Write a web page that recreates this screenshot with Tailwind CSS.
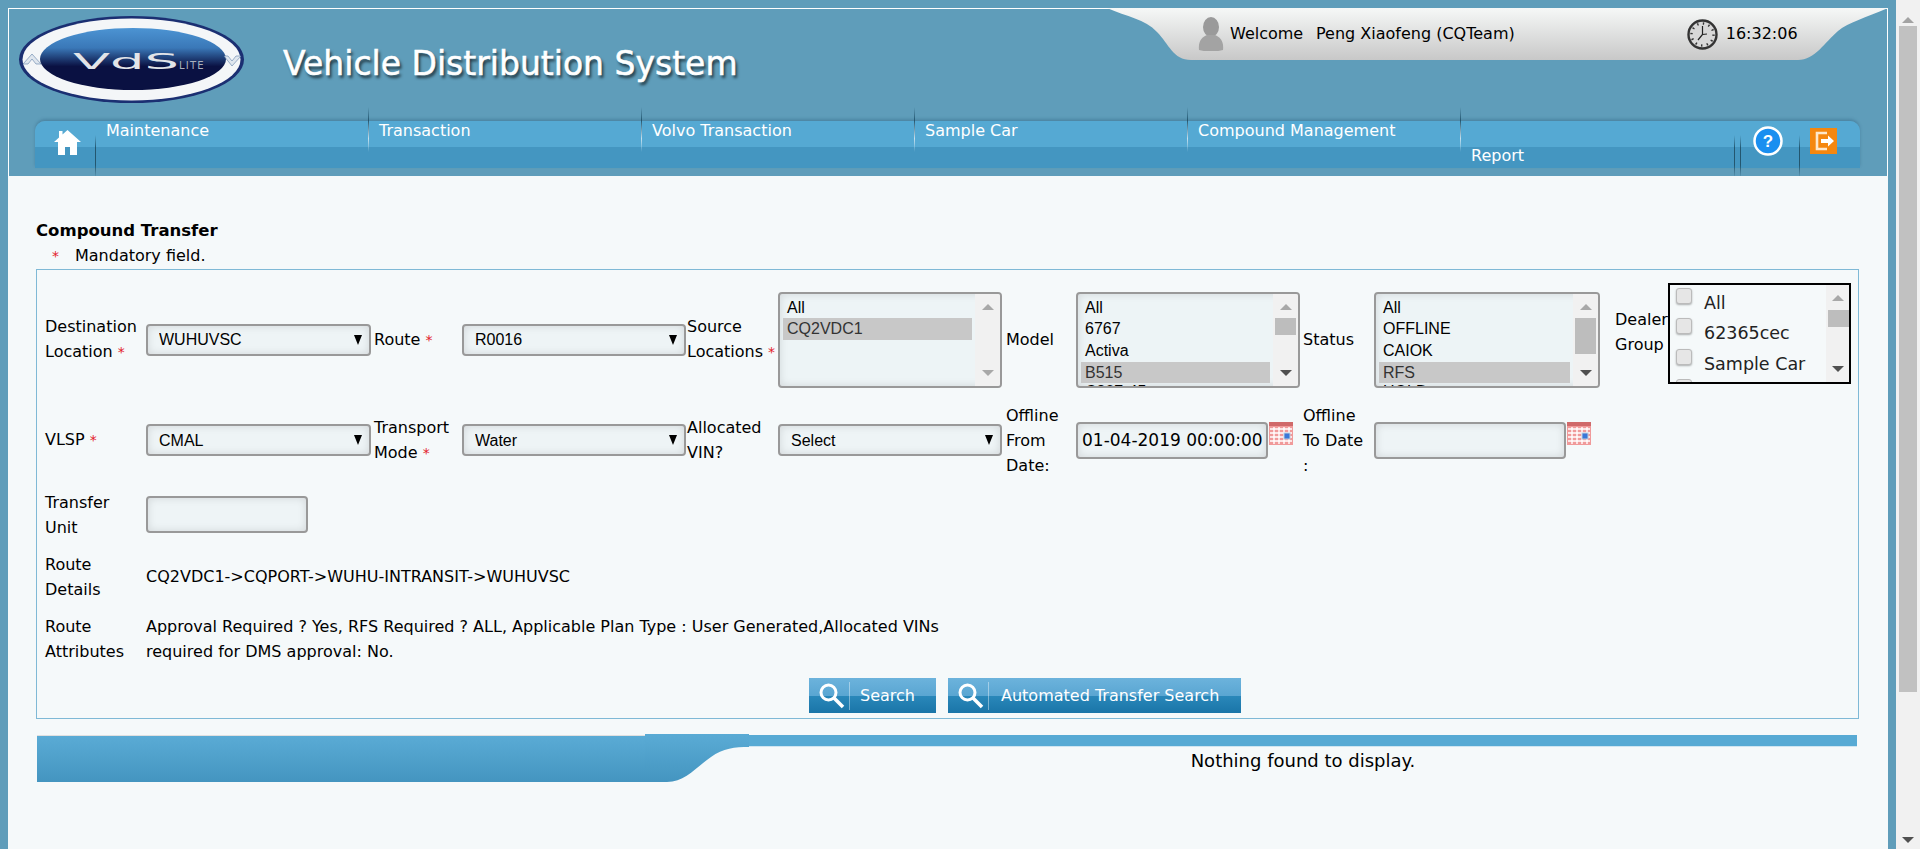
<!DOCTYPE html>
<html lang="en">
<head>
    <meta charset="UTF-8">
    <title>Vehicle Distribution System</title>
    <script src="https://cdn.jsdelivr.net/npm/@tailwindcss/browser@4"></script>
</head>
<body class="flex h-[849px] overflow-hidden bg-[#5f9dba] text-[16px] text-black [font-family:'DejaVu_Sans',sans-serif]">
    <div class="ml-2 mt-2 flex w-[1880px] shrink-0 flex-col">
        <!-- Header -->
        <header class="h-[168px] shrink-0 border-x border-t border-white">
            <div class="flex h-[111px]">
                <svg class="ml-[9px] mt-[6px] h-[89px] w-[227px] shrink-0" viewBox="0 0 227 89">
                    <defs>
                        <linearGradient id="logoFill" x1="0" y1="0" x2="0" y2="1">
                            <stop offset="0" stop-color="#4c94d3"/>
                            <stop offset="0.32" stop-color="#3a78b8"/>
                            <stop offset="0.62" stop-color="#0a1142"/>
                            <stop offset="1" stop-color="#0a1142"/>
                        </linearGradient>
                    </defs>
                    <ellipse cx="113.5" cy="44.5" rx="112.5" ry="43.5" fill="#1b2f72"/>
                    <ellipse cx="113.5" cy="44.5" rx="109" ry="41" fill="#f4f6f8"/>
                    <ellipse cx="115" cy="44" rx="93" ry="31" fill="url(#logoFill)"/>
                    <path d="M5 49 L14 39 L23 49 L18 49 L14 44 L10 49Z" fill="#dfe6ee" stroke="#5f7fa8" stroke-width="0.6"/>
                    <path d="M206 41 L214 51 L223 41 L218 41 L214 46 L210 41Z" fill="#dfe6ee" stroke="#5f7fa8" stroke-width="0.6"/>
                    <text x="55" y="54" font-size="21" fill="#e2e4e8" textLength="106" lengthAdjust="spacingAndGlyphs" font-family="DejaVu Sans">VdS</text>
                    <text x="161" y="54" font-size="10" letter-spacing="1.2" fill="#aab0bc" font-family="DejaVu Sans">LITE</text>
                </svg>
                <h1 class="ml-[38px] mt-[26px] h-[58px] text-[33px] leading-[58px] whitespace-nowrap text-white [text-shadow:2px_3px_3px_rgba(0,0,0,0.65)] [-webkit-text-stroke:0.5px_white]">Vehicle Distribution System</h1>
                <!-- Welcome pill -->
                <div class="relative -mt-px ml-auto -mr-px h-[52px] w-[781px] shrink-0">
                    <svg class="absolute inset-0 h-[52px] w-[781px]" viewBox="0 0 781 52">
                        <defs>
                            <linearGradient id="pillFill" x1="0" y1="0" x2="0" y2="1">
                                <stop offset="0" stop-color="#f6f8f7"/>
                                <stop offset="1" stop-color="#c8c8c8"/>
                            </linearGradient>
                        </defs>
                        <path d="M0 0 H781 C758 10 742 14 731 23 C718 34 708 52 691 52 H84 C66 52 62 36 50 24 C38 11 20 9 0 0Z" fill="url(#pillFill)"/>
                    </svg>
                    <div class="relative flex h-[52px] items-center pl-[91px]">
                        <svg class="h-[34px] w-[26px] shrink-0" viewBox="0 0 26 34">
                            <ellipse cx="13" cy="10" rx="8" ry="10" fill="#9a9a9a"/>
                            <path d="M1 33 C0 24 4 20 9 18 H17 C22 20 26 24 25 33 C18 35 8 35 1 33Z" fill="#a3a3a3"/>
                        </svg>
                        <span class="ml-[6px] w-[86px] shrink-0 whitespace-nowrap">Welcome</span>
                        <span class="whitespace-nowrap">Peng Xiaofeng (CQTeam)</span>
                        <svg class="ml-[172px] h-[31px] w-[31px] shrink-0" viewBox="0 0 31 31">
                            <circle cx="15.5" cy="15.5" r="14" fill="#d8d8d8" stroke="#333" stroke-width="2.4"/>
                            <circle cx="15.5" cy="15.5" r="11" fill="none" stroke="#333" stroke-width="2.4" stroke-dasharray="1.4 4.36"/>
                            <path d="M15.5 7 V15.5 L11 21 M15.5 15.5 L20 15" fill="none" stroke="#222" stroke-width="1.2"/>
                        </svg>
                        <span class="ml-2 whitespace-nowrap">16:32:06</span>
                    </div>
                </div>
            </div>
            <!-- Menu bar -->
            <nav class="relative ml-[26px] mt-px flex h-[47px] w-[1825px] rounded-t-[10px] bg-[linear-gradient(#55a9d3_0,#55a9d3_55%,#4496c1_55%,#4496c1_100%)] text-white shadow-[0_-2px_3px_rgba(40,90,120,0.35)]">
                <div class="relative flex w-[61px] shrink-0 justify-center pl-[4px] pt-[8px]">
                    <svg class="h-[26px] w-[27px]" viewBox="0 0 27 26">
                        <path d="M13.5 1 L27 13 H23 V26 H16 V18 H11 V26 H4 V13 H0 L5 8.5 V2 H8.5 V5.5Z" fill="#fff"/>
                    </svg>
                    <i class="absolute right-0 top-[14px] h-[43px] w-px bg-[linear-gradient(transparent,#23566f_30%,#23566f_70%,transparent)]"></i>
                </div>
                <a class="relative w-[273px] shrink-0 pl-[10px] leading-[20px]">Maintenance<i class="absolute -top-[14px] right-0 h-[45px] w-px bg-[linear-gradient(transparent,#23566f_30%,#c5e0ee_70%,transparent)]"></i></a>
                <a class="relative w-[273px] shrink-0 pl-[10px] leading-[20px]">Transaction<i class="absolute -top-[14px] right-0 h-[45px] w-px bg-[linear-gradient(transparent,#23566f_30%,#c5e0ee_70%,transparent)]"></i></a>
                <a class="relative w-[273px] shrink-0 pl-[10px] leading-[20px]">Volvo Transaction<i class="absolute -top-[14px] right-0 h-[45px] w-px bg-[linear-gradient(transparent,#23566f_30%,#c5e0ee_70%,transparent)]"></i></a>
                <a class="relative w-[273px] shrink-0 pl-[10px] leading-[20px]">Sample Car<i class="absolute -top-[14px] right-0 h-[45px] w-px bg-[linear-gradient(transparent,#23566f_30%,#c5e0ee_70%,transparent)]"></i></a>
                <a class="relative w-[273px] shrink-0 pl-[10px] leading-[20px]">Compound Management<i class="absolute -top-[14px] right-0 h-[45px] w-px bg-[linear-gradient(transparent,#23566f_30%,#c5e0ee_70%,transparent)]"></i></a>
                <a class="relative w-[274px] shrink-0 pl-[10px] pt-[25px] leading-[20px]">Report<i class="absolute right-0 top-[14px] h-[43px] w-px bg-[linear-gradient(transparent,#23566f_30%,#23566f_70%,transparent)]"></i></a>
                <div class="relative w-[6px] shrink-0"><i class="absolute right-0 top-[14px] h-[43px] w-px bg-[linear-gradient(transparent,#23566f_30%,#23566f_70%,transparent)]"></i></div>
                <div class="relative flex w-[59px] shrink-0 justify-center pr-[6px] pt-[5px]">
                    <svg class="h-[30px] w-[30px]" viewBox="0 0 30 30">
                        <circle cx="15" cy="15" r="13.5" fill="#1a8ff0" stroke="#fff" stroke-width="2.5"/>
                        <text x="15" y="21" text-anchor="middle" font-size="17" font-weight="700" fill="#fff" font-family="Liberation Sans">?</text>
                    </svg>
                    <i class="absolute right-0 top-[14px] h-[43px] w-px bg-[linear-gradient(transparent,#23566f_30%,#23566f_70%,transparent)]"></i>
                </div>
                <div class="pl-[10px] pt-[7px]">
                    <svg class="h-[26px] w-[27px]" viewBox="0 0 27 26">
                        <rect width="27" height="26" fill="#f5870f"/>
                        <path d="M17 5 H7 V21 H17" fill="none" stroke="#fde7cc" stroke-width="2.6"/>
                        <path d="M11 11 H18 V7.5 L24 13 L18 18.5 V15 H11Z" fill="#fff"/>
                    </svg>
                </div>
            </nav>
        </header>

        <!-- Content -->
        <main class="relative min-h-0 flex-1 bg-[#f5f9fa] pl-[28px] pt-[42px]">
            <h2 class="h-[25px] text-[16.5px] font-bold leading-[25px]">Compound Transfer</h2>
            <p class="flex h-[26px] items-center"><span class="w-[39px] pl-4 text-[14px] text-[#e3202a]">*</span>Mandatory field.</p>

            <form class="h-[450px] w-[1823px] border border-[#7fb9d6] px-2 pt-[13px]">
                <div class="grid grid-cols-[101px_228px_88px_225px_91px_228px_70px_227px_71px_241px_53px_183px] grid-rows-[113px_88px_61px_63px_62px] items-center leading-[25px]">
                    <!-- Row 1 -->
                    <label>Destination Location <b class="font-normal text-[14px] text-[#e3202a]">*</b></label>
                    <div class="relative h-[32px] w-[225px]">
                        <select class="h-full w-full appearance-none rounded-[4px] border-2 border-[#999] bg-[#eef4f6] pl-[11px] font-['Liberation_Sans'] text-[16px] shadow-[inset_0_0_8px_rgba(0,0,0,0.12)]"><option>WUHUVSC</option></select>
                        <i class="absolute right-[9px] top-[11px] h-0 w-0 border-x-[4.5px] border-t-[10px] border-x-transparent border-t-black"></i>
                    </div>
                    <label>Route <b class="font-normal text-[14px] text-[#e3202a]">*</b></label>
                    <div class="relative h-[32px] w-[224px]">
                        <select class="h-full w-full appearance-none rounded-[4px] border-2 border-[#999] bg-[#eef4f6] pl-[11px] font-['Liberation_Sans'] text-[16px] shadow-[inset_0_0_8px_rgba(0,0,0,0.12)]"><option>R0016</option></select>
                        <i class="absolute right-[9px] top-[11px] h-0 w-0 border-x-[4.5px] border-t-[10px] border-x-transparent border-t-black"></i>
                    </div>
                    <label>Source Locations <b class="font-normal text-[14px] text-[#e3202a]">*</b></label>
                    <div class="flex h-[96px] w-[224px] overflow-hidden rounded-[4px] border-2 border-[#999] bg-[#edf4f6] font-['Liberation_Sans'] text-[16px] leading-[21.7px] shadow-[inset_0_0_8px_rgba(0,0,0,0.12)]">
                        <ul class="w-[192px] shrink-0 pl-[3px] pt-[3px]">
                            <li class="pl-[4px]">All</li>
                            <li class="bg-[#c8c8c8] pl-[4px] text-[#333]">CQ2VDC1</li>
                        </ul>
                        <div class="ml-auto flex w-[25px] flex-col items-center justify-between bg-[#f1f1f1] py-[10px]">
                            <i class="h-0 w-0 border-x-[6px] border-b-[6px] border-x-transparent border-b-[#a8a8a8]"></i>
                            <i class="h-0 w-0 border-x-[6px] border-t-[6px] border-x-transparent border-t-[#a8a8a8]"></i>
                        </div>
                    </div>
                    <label>Model</label>
                    <div class="flex h-[96px] w-[224px] overflow-hidden rounded-[4px] border-2 border-[#999] bg-[#edf4f6] font-['Liberation_Sans'] text-[16px] leading-[21.7px] shadow-[inset_0_0_8px_rgba(0,0,0,0.12)]">
                        <ul class="w-[192px] shrink-0 pl-[3px] pt-[3px]">
                            <li class="pl-[4px]">All</li>
                            <li class="pl-[4px]">6767</li>
                            <li class="pl-[4px]">Activa</li>
                            <li class="bg-[#c8c8c8] pl-[4px] text-[#333]">B515</li>
                            <li class="pl-[4px] leading-[17px]">C307-45</li>
                        </ul>
                        <div class="relative ml-auto flex w-[25px] flex-col items-center justify-between bg-[#f1f1f1] py-[10px]">
                            <i class="h-0 w-0 border-x-[6px] border-b-[6px] border-x-transparent border-b-[#a8a8a8]"></i>
                            <i class="absolute left-[2px] top-[24px] h-[17px] w-[21px] bg-[#bdbdbd]"></i>
                            <i class="h-0 w-0 border-x-[6px] border-t-[6px] border-x-transparent border-t-[#505050]"></i>
                        </div>
                    </div>
                    <label>Status</label>
                    <div class="flex h-[96px] w-[226px] overflow-hidden rounded-[4px] border-2 border-[#999] bg-[#edf4f6] font-['Liberation_Sans'] text-[16px] leading-[21.7px] shadow-[inset_0_0_8px_rgba(0,0,0,0.12)]">
                        <ul class="w-[194px] shrink-0 pl-[3px] pt-[3px]">
                            <li class="pl-[4px]">All</li>
                            <li class="pl-[4px]">OFFLINE</li>
                            <li class="pl-[4px]">CAIOK</li>
                            <li class="bg-[#c8c8c8] pl-[4px] text-[#333]">RFS</li>
                            <li class="pl-[4px] leading-[17px]">HOLD</li>
                        </ul>
                        <div class="relative ml-auto flex w-[25px] flex-col items-center justify-between bg-[#f1f1f1] py-[10px]">
                            <i class="h-0 w-0 border-x-[6px] border-b-[6px] border-x-transparent border-b-[#a8a8a8]"></i>
                            <i class="absolute left-[2px] top-[24px] h-[36px] w-[21px] bg-[#bdbdbd]"></i>
                            <i class="h-0 w-0 border-x-[6px] border-t-[6px] border-x-transparent border-t-[#505050]"></i>
                        </div>
                    </div>
                    <label class="-mt-[15px]">Dealer<br>Group</label>
                    <div class="relative -mt-[13px] flex h-[101px] w-[183px] overflow-hidden border-2 border-black bg-[#f5f9fa]">
                        <ul class="w-[156px] shrink-0 pl-[6px] pt-[3px] text-[17.5px] text-[#222]">
                            <li class="flex h-[30.5px] items-start"><i class="h-[16px] w-[16px] shrink-0 rounded-[3px] border border-[#bbb] bg-[#e6e6e6] shadow-[0_1px_2px_rgba(0,0,0,0.3)]"></i><span class="ml-3 mt-[3px]">All</span></li>
                            <li class="flex h-[30.5px] items-start"><i class="h-[16px] w-[16px] shrink-0 rounded-[3px] border border-[#bbb] bg-[#e6e6e6] shadow-[0_1px_2px_rgba(0,0,0,0.3)]"></i><span class="ml-3 mt-[3px]">62365cec</span></li>
                            <li class="flex h-[30.5px] items-start"><i class="h-[16px] w-[16px] shrink-0 rounded-[3px] border border-[#bbb] bg-[#e6e6e6] shadow-[0_1px_2px_rgba(0,0,0,0.3)]"></i><span class="ml-3 mt-[3px] whitespace-nowrap">Sample Car</span></li>
                            <li class="flex h-[30.5px] items-start"><i class="h-[16px] w-[16px] shrink-0 rounded-[3px] border border-[#bbb] bg-[#e6e6e6]"></i></li>
                        </ul>
                        <div class="relative ml-auto flex w-[24px] flex-col items-center justify-between bg-[#f1f1f1] py-[10px]">
                            <i class="h-0 w-0 border-x-[6px] border-b-[6px] border-x-transparent border-b-[#a8a8a8]"></i>
                            <i class="absolute left-[2px] top-[25px] h-[17px] w-[21px] bg-[#bdbdbd]"></i>
                            <i class="h-0 w-0 border-x-[6px] border-t-[6px] border-x-transparent border-t-[#505050]"></i>
                        </div>
                    </div>

                    <!-- Row 2 -->
                    <label>VLSP <b class="font-normal text-[14px] text-[#e3202a]">*</b></label>
                    <div class="relative h-[32px] w-[225px]">
                        <select class="h-full w-full appearance-none rounded-[4px] border-2 border-[#999] bg-[#eef4f6] pl-[11px] font-['Liberation_Sans'] text-[16px] shadow-[inset_0_0_8px_rgba(0,0,0,0.12)]"><option>CMAL</option></select>
                        <i class="absolute right-[9px] top-[11px] h-0 w-0 border-x-[4.5px] border-t-[10px] border-x-transparent border-t-black"></i>
                    </div>
                    <label>Transport<br>Mode <b class="font-normal text-[14px] text-[#e3202a]">*</b></label>
                    <div class="relative h-[32px] w-[224px]">
                        <select class="h-full w-full appearance-none rounded-[4px] border-2 border-[#999] bg-[#eef4f6] pl-[11px] font-['Liberation_Sans'] text-[16px] shadow-[inset_0_0_8px_rgba(0,0,0,0.12)]"><option>Water</option></select>
                        <i class="absolute right-[9px] top-[11px] h-0 w-0 border-x-[4.5px] border-t-[10px] border-x-transparent border-t-black"></i>
                    </div>
                    <label>Allocated<br>VIN?</label>
                    <div class="relative h-[32px] w-[224px]">
                        <select class="h-full w-full appearance-none rounded-[4px] border-2 border-[#999] bg-[#eef4f6] pl-[11px] font-['Liberation_Sans'] text-[16px] shadow-[inset_0_0_8px_rgba(0,0,0,0.12)]"><option>Select</option></select>
                        <i class="absolute right-[9px] top-[11px] h-0 w-0 border-x-[4.5px] border-t-[10px] border-x-transparent border-t-black"></i>
                    </div>
                    <label>Offline<br>From<br>Date:</label>
                    <div class="flex items-start">
                        <input value="01-04-2019 00:00:00" class="h-[37px] w-[192px] rounded-[4px] border-2 border-[#999] bg-[#eef4f6] pl-[4px] text-[17px] shadow-[inset_0_0_8px_rgba(0,0,0,0.12)]">
                        <svg class="ml-px h-[23px] w-[24px]" viewBox="0 0 24 23">
                            <rect width="24" height="23" fill="#f09a9a"/>
                            <rect y="0" width="24" height="4" fill="#d06a6a"/>
                            <path d="M1 7H23M1 11H23M1 15H23M1 19H23M5 5V22M10 5V22M15 5V22M20 5V22" stroke="#fff" stroke-width="1.4"/>
                            <rect x="15" y="11" width="6" height="6" fill="#3a78d8" stroke="#bcd" stroke-width="1"/>
                        </svg>
                    </div>
                    <label>Offline<br>To Date<br>:</label>
                    <div class="flex items-start">
                        <input class="h-[37px] w-[192px] rounded-[4px] border-2 border-[#999] bg-[#eef4f6] shadow-[inset_0_0_8px_rgba(0,0,0,0.12)]">
                        <svg class="ml-px h-[23px] w-[24px]" viewBox="0 0 24 23">
                            <rect width="24" height="23" fill="#f09a9a"/>
                            <rect y="0" width="24" height="4" fill="#d06a6a"/>
                            <path d="M1 7H23M1 11H23M1 15H23M1 19H23M5 5V22M10 5V22M15 5V22M20 5V22" stroke="#fff" stroke-width="1.4"/>
                            <rect x="15" y="11" width="6" height="6" fill="#3a78d8" stroke="#bcd" stroke-width="1"/>
                        </svg>
                    </div>
                    <div class="col-span-2"></div>

                    <!-- Row 3 -->
                    <label>Transfer<br>Unit</label>
                    <input class="h-[37px] w-[162px] rounded-[4px] border-2 border-[#999] bg-[#eef4f6] shadow-[inset_0_0_8px_rgba(0,0,0,0.12)]">
                    <div class="col-span-10"></div>

                    <!-- Row 4 -->
                    <label>Route<br>Details</label>
                    <p class="col-span-5">CQ2VDC1-&gt;CQPORT-&gt;WUHU-INTRANSIT-&gt;WUHUVSC</p>
                    <div class="col-span-6"></div>

                    <!-- Row 5 -->
                    <label>Route<br>Attributes</label>
                    <p class="col-span-5">Approval Required ? Yes, RFS Required ? ALL, Applicable Plan Type : User Generated,Allocated VINs<br>required for DMS approval: No.</p>
                    <div class="col-span-6"></div>
                </div>
                <div class="ml-[764px] mt-[8px] flex gap-3">
                    <button type="button" class="flex h-[35px] w-[127px] items-center bg-[linear-gradient(#6cb3dc_0,#5aa6d2_50%,#2a88ba_50%,#1a75a8_100%)] pl-[9px] text-[16px] text-white">
                        <svg class="h-[28px] w-[28px] shrink-0" viewBox="0 0 28 28"><circle cx="10.5" cy="10.5" r="7.5" fill="none" stroke="#fff" stroke-width="3"/><path d="M16 16 L25 25" stroke="#fff" stroke-width="3.5"/></svg>
                        <i class="ml-[3px] h-[28px] w-px bg-white/40"></i>
                        <span class="ml-[10px]">Search</span>
                    </button>
                    <button type="button" class="flex h-[35px] w-[293px] items-center bg-[linear-gradient(#6cb3dc_0,#5aa6d2_50%,#2a88ba_50%,#1a75a8_100%)] pl-[9px] text-[16px] text-white">
                        <svg class="h-[28px] w-[28px] shrink-0" viewBox="0 0 28 28"><circle cx="10.5" cy="10.5" r="7.5" fill="none" stroke="#fff" stroke-width="3"/><path d="M16 16 L25 25" stroke="#fff" stroke-width="3.5"/></svg>
                        <i class="ml-[3px] h-[28px] w-px bg-white/40"></i>
                        <span class="ml-[12px] whitespace-nowrap">Automated Transfer Search</span>
                    </button>
                </div>
            </form>

            <!-- Result tab -->
            <div class="ml-px mt-[16px] flex w-[1820px]">
                <div class="h-[47px] w-[608px] shrink-0 border-t border-[#e0e0e0] bg-[linear-gradient(#5aabd5,#4495c0)]"></div>
                <svg class="-mt-px h-[48px] w-[104px] shrink-0" viewBox="0 0 104 48">
                    <defs><linearGradient id="tabFill" x1="0" y1="0" x2="0" y2="1"><stop offset="0" stop-color="#5aabd5"/><stop offset="1" stop-color="#4495c0"/></linearGradient></defs>
                    <path d="M0 0 H104 V13 C90 13 78 14 66 23 C50 34 40 48 22 48 H0Z" fill="url(#tabFill)"/>
                </svg>
                <div class="flex-1">
                    <div class="h-[12px] border-b border-[#cfe5f1] bg-[#57aad4]"></div>
                    <p class="mt-[3px] text-center text-[18px] leading-[22px]">Nothing found to display.</p>
                </div>
            </div>
        </main>
    </div>

    <!-- Page scrollbar -->
    <div class="ml-2 flex w-6 shrink-0 flex-col items-center bg-[#f1f1f1]">
        <i class="mt-[17px] h-0 w-0 border-x-[6px] border-b-[6px] border-x-transparent border-b-[#a3a3a3]"></i>
        <i class="mt-[3px] h-[666px] w-[18px] bg-[#c1c1c1]"></i>
        <i class="mt-auto mb-[6px] h-0 w-0 border-x-[6px] border-t-[6px] border-x-transparent border-t-[#505050]"></i>
    </div>
</body>
</html>
